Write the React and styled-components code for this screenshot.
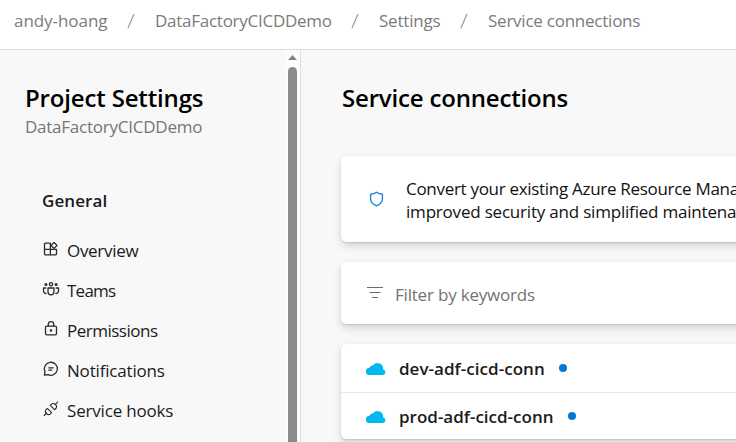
import React from "react";
import styled, { createGlobalStyle } from "styled-components";

const GlobalStyle = createGlobalStyle`
  * { box-sizing: border-box; }
  body {
    margin: 0;
    overflow: hidden;
    background: #f8f8f8;
    color: #1b1b1b;
    font: 400 17px "Open Sans", "Noto Sans", sans-serif;
  }
`;

const Page = styled.div`
  display: flex;
  flex-direction: column;
  width: 100vw;
  height: 100vh;
  overflow: hidden;
`;

const Text = styled.span`
  white-space: nowrap;
  letter-spacing: ${(p) => p.$track || 0}px;
`;

const Header = styled.header`
  display: flex;
  flex: none;
  height: 50px;
  padding: 0 0 8px 14px;
  align-items: center;
  background: #fff;
  border-bottom: 1px solid #dedede;
  color: #7b7b7b;
`;

const Crumb = styled(Text)`
  flex: none;
  width: ${(p) => p.$width}px;
`;

const Slash = styled.svg`
  flex: none;
  width: 8px;
  height: 16px;
  margin: 1px 20px 0 19px;
  stroke: #999;
  stroke-width: 1.2;
`;

const Body = styled.div`
  display: flex;
  flex: 1;
  min-height: 0;
`;

const Sidebar = styled.aside`
  flex: none;
  width: 285px;
  padding: 32px 0 0 25px;
`;

const Title = styled.h1`
  margin: 0;
  color: #000;
  font-size: 24px;
  font-weight: 600;
  line-height: 32px;
  letter-spacing: ${(p) => p.$track}px;
  white-space: nowrap;
`;

const Subtitle = styled.div`
  margin-top: 2px;
  color: #767676;
  line-height: 21px;
  letter-spacing: -0.24px;
`;

const GroupTitle = styled.h2`
  margin: 52px 0 0 17px;
  font-size: 17px;
  font-weight: 600;
  line-height: 24px;
  letter-spacing: 0.1px;
`;

const Nav = styled.nav`
  display: flex;
  flex-direction: column;
  margin: 17px 0 0 17px;
`;

const NavItem = styled.a`
  display: flex;
  align-items: center;
  height: 40px;
  gap: 7px;
`;

const NavIcon = styled.svg`
  flex: none;
  width: 18px;
  height: 18px;
  margin-top: -2px;
  fill: none;
  stroke: #2b2b2b;
  stroke-width: 1.3;
  stroke-linecap: round;
  stroke-linejoin: round;
`;

const ScrollTrack = styled.div`
  display: flex;
  flex: none;
  flex-direction: column;
  align-items: center;
  width: 16px;
  padding-top: 5px;
  background: #fcfcfc;
  border-right: 1px solid #e0e0e0;
`;

const ScrollArrow = styled.svg`
  flex: none;
  width: 9px;
  height: 5px;
  fill: #858585;
`;

const ScrollThumb = styled.div`
  flex: 1;
  width: 9px;
  margin-top: 7px;
  border-radius: 5px 5px 0 0;
  background: #8b8b8b;
`;

const Main = styled.main`
  display: flex;
  flex: 1;
  flex-direction: column;
  min-width: 0;
  padding: 32px 0 0 40px;
`;

const PageTitle = styled(Title)`
  padding-left: 1px;
`;

const Card = styled.section`
  flex: none;
  width: 480px;
  border-radius: 5px;
  background: #fff;
  box-shadow: 0 4px 9px rgba(0, 0, 0, 0.14), 0 1px 2px rgba(0, 0, 0, 0.13);
`;

const Banner = styled(Card)`
  display: flex;
  height: 86px;
  margin-top: 42px;
  padding: 21px 0 0 28px;
  color: #111;
`;

const ShieldIcon = styled.svg`
  flex: none;
  width: 15px;
  height: 16px;
  margin: 14px 22px 0 0;
  fill: none;
  stroke: #1a80d9;
  stroke-width: 1.35;
  stroke-linejoin: round;
`;

const BannerCopy = styled.div`
  display: flex;
  flex-direction: column;
  line-height: 23px;
`;

const FilterBar = styled(Card)`
  display: flex;
  align-items: center;
  height: 62px;
  margin-top: 20px;
  padding: 3px 0 0 26px;
  gap: 12px;
  color: #737373;
`;

const FilterIcon = styled.svg`
  width: 16px;
  height: 12px;
  margin-top: -6px;
  stroke: #6c6c6c;
  stroke-width: 1.1;
`;

const ConnectionList = styled(Card)`
  margin-top: 20px;
`;

const Connection = styled.div`
  display: flex;
  align-items: center;
  height: ${(p) => p.$height}px;
  padding-left: 25px;
  font-weight: 600;

  & + & {
    border-top: 1px solid #e9e9e9;
  }
`;

const CloudIcon = styled.svg`
  flex: none;
  width: 20px;
  height: 13px;
  margin-right: 13px;
  fill: #00b9f2;
`;

const StatusDot = styled.i`
  width: 8px;
  height: 8px;
  margin: -1px 0 0 14px;
  border-radius: 50%;
  background: #0078d4;
`;

const crumbs = [
  { label: "andy-hoang", width: 94, track: -0.06 },
  { label: "DataFactoryCICDDemo", width: 177, track: -0.26 },
  { label: "Settings", width: 62, track: -0.2 },
  { label: "Service connections", width: 160, track: -0.24 },
];

const navItems = [
  {
    label: "Overview",
    track: -0.3,
    icon: (
      <>
        <path d="M8.2 3.1H3.6A1.1 1.1 0 0 0 2.5 4.2v9.6a1.1 1.1 0 0 0 1.1 1.1h9.8a1.1 1.1 0 0 0 1.1-1.1V9.3h-12M8.4 3.4v11.3" />
        <rect x="9.9" y="3.3" width="4.3" height="4.3" rx=".5" transform="rotate(45 12.05 5.45)" />
      </>
    ),
  },
  {
    label: "Teams",
    track: -0.75,
    icon: (
      <>
        <circle cx="9" cy="4.2" r="1.6" />
        <circle cx="3.9" cy="4.5" r=".9" />
        <circle cx="14.1" cy="4.5" r=".9" />
        <path d="M6 8h6v3.8a3 3 0 0 1-6 0zM3.8 8H1.5v2.8a2.6 2.6 0 0 0 2.6 2.7M14.2 8h2.3v2.8a2.6 2.6 0 0 1-2.6 2.7" />
      </>
    ),
  },
  {
    label: "Permissions",
    track: -0.5,
    icon: (
      <>
        <rect x="3.5" y="6.2" width="11" height="8.6" rx="1.2" />
        <path d="M6.3 6V4.3a2.7 2.7 0 0 1 5.4 0V6" />
        <circle cx="9" cy="10.5" r=".6" fill="#2b2b2b" />
      </>
    ),
  },
  {
    label: "Notifications",
    track: -0.18,
    icon: <path d="M2.4 15.2l.6-3.6A6.5 6.5 0 1 1 6 14.6zM6.8 7.8h4.5M6.8 10.2h2.9" />,
  },
  {
    label: "Service hooks",
    track: -0.18,
    icon: (
      <g strokeWidth="1.1">
        <path d="M2.2 15.5l2.6-2.6M13.2 4.6l2.4-2.4" />
        <path d="M5.3 8.4l4.3 4.3-1.2 1.2a2.6 2.6 0 0 1-3.7 0l-.6-.6a2.6 2.6 0 0 1 0-3.7z" />
        <path d="M8.3 5.4l4.3 4.3 1.2-1.2a2.6 2.6 0 0 0 0-3.7l-.6-.6a2.6 2.6 0 0 0-3.7 0z" />
      </g>
    ),
  },
];

const connections = [
  { name: "dev-adf-cicd-conn", height: 48, track: 0.04 },
  { name: "prod-adf-cicd-conn", height: 47, track: 0 },
];

export default function App() {
  return (
    <Page>
      <GlobalStyle />
      <Header>
        {crumbs.map((c, i) => (
          <React.Fragment key={c.label}>
            {i > 0 && (
              <Slash viewBox="0 0 8 16">
                <path d="M1 15L7 1" />
              </Slash>
            )}
            <Crumb $width={c.width} $track={c.track}>{c.label}</Crumb>
          </React.Fragment>
        ))}
      </Header>
      <Body>
        <Sidebar>
          <Title $track={-0.16}>Project Settings</Title>
          <Subtitle>DataFactoryCICDDemo</Subtitle>
          <GroupTitle>General</GroupTitle>
          <Nav>
            {navItems.map((item) => (
              <NavItem key={item.label}>
                <NavIcon viewBox="0 0 18 18">{item.icon}</NavIcon>
                <Text $track={item.track}>{item.label}</Text>
              </NavItem>
            ))}
          </Nav>
        </Sidebar>
        <ScrollTrack>
          <ScrollArrow viewBox="0 0 9 5">
            <path d="M4.5 0L9 5H0z" />
          </ScrollArrow>
          <ScrollThumb />
        </ScrollTrack>
        <Main>
          <PageTitle $track={-0.18}>Service connections</PageTitle>
          <Banner>
            <ShieldIcon viewBox="0 0 15 16">
              <path d="M7.5 1.2C5.8 2.5 3.8 3 1.6 3.1v4.7c0 3.4 2.2 5.7 5.9 7 3.7-1.3 5.9-3.6 5.9-7V3.1C11.2 3 9.2 2.5 7.5 1.2z" />
            </ShieldIcon>
            <BannerCopy>
              <Text $track={-0.3}>Convert your existing Azure Resource Manager service connections</Text>
              <Text $track={-0.2}>improved security and simplified maintenance.</Text>
            </BannerCopy>
          </Banner>
          <FilterBar>
            <FilterIcon viewBox="0 0 16 12">
              <path d="M0 1.5h16M2.5 6.5h11M5 11.5h6" />
            </FilterIcon>
            <Text $track={-0.2}>Filter by keywords</Text>
          </FilterBar>
          <ConnectionList>
            {connections.map((c) => (
              <Connection key={c.name} $height={c.height}>
                <CloudIcon viewBox="0 0 20 13">
                  <path d="M3.7 13A3.6 3.6 0 0 1 3.4 5.8 4 4 0 0 1 7 3.2 5.7 5.7 0 0 1 17.1 7.5 2.8 2.8 0 0 1 17.2 13z" />
                </CloudIcon>
                <Text $track={c.track}>{c.name}</Text>
                <StatusDot />
              </Connection>
            ))}
          </ConnectionList>
        </Main>
      </Body>
    </Page>
  );
}
